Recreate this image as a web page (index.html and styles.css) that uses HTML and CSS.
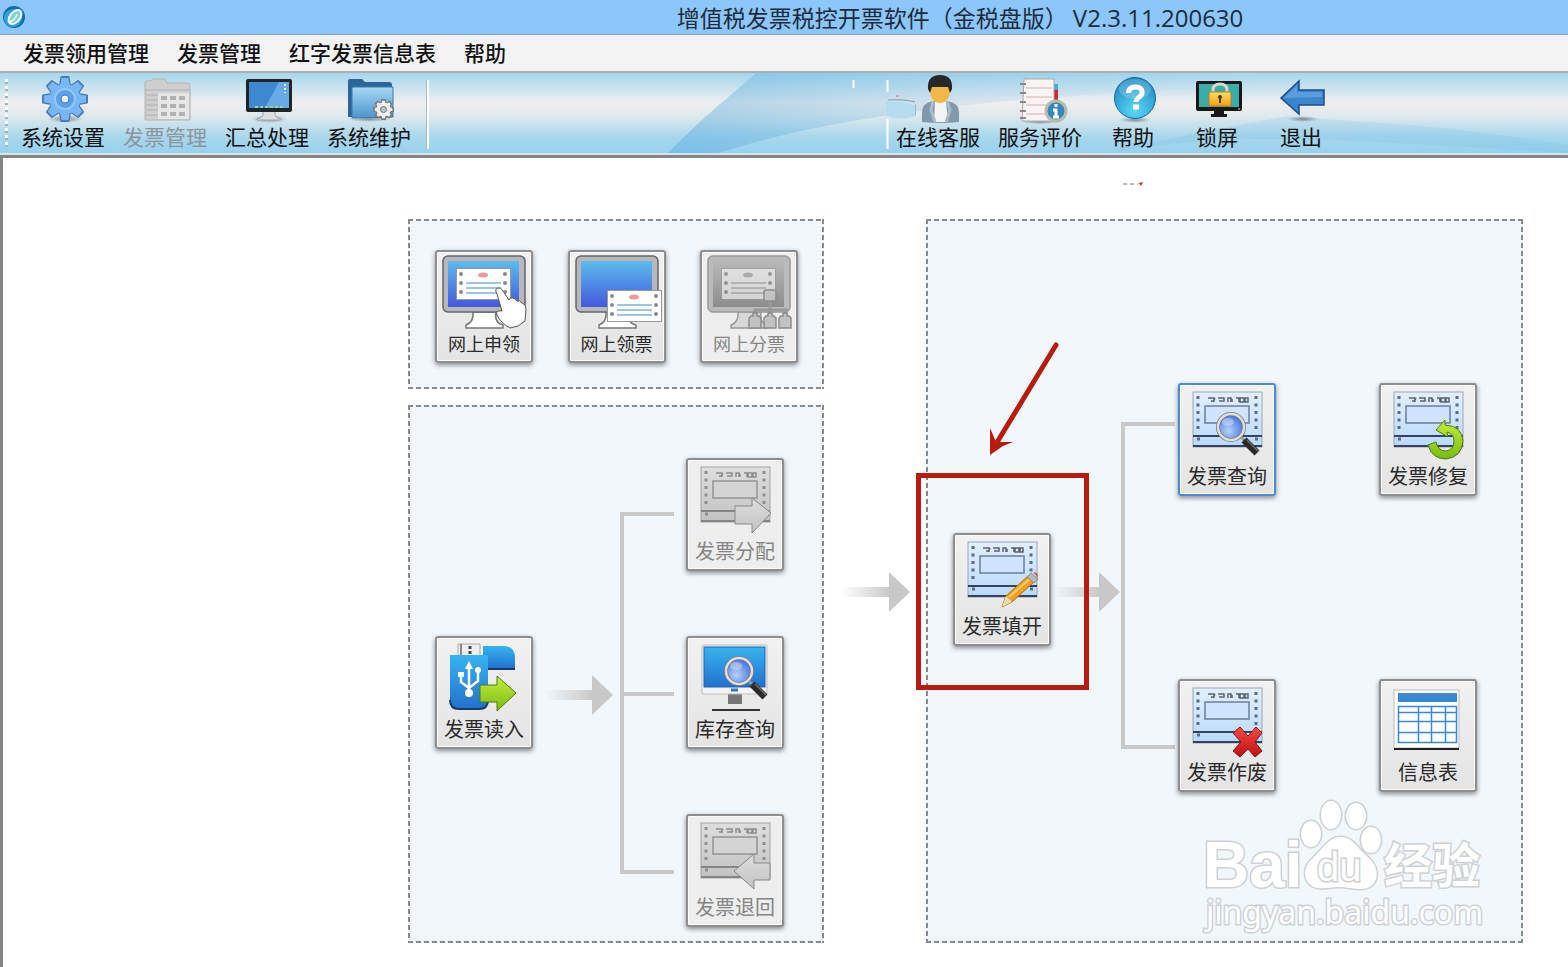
FILE: index.html
```
<!DOCTYPE html>
<html lang="zh-CN">
<head>
    <meta charset="UTF-8">
    <meta name="viewport" content="width=device-width, initial-scale=1.0">
    <title>增值税发票税控开票软件</title>
    <link rel="stylesheet" href="styles.css">
</head>
<body>
    <!-- shared gradients and icon parts -->
    <svg class="defs" width="0" height="0" aria-hidden="true">
        <defs>
            <linearGradient id="g-screen" x1="0" y1="0" x2="0" y2="1"><stop offset="0" stop-color="#5cbcec"/><stop offset="1" stop-color="#4458dc"/></linearGradient>
            <linearGradient id="g-screen-off" x1="0" y1="0" x2="0" y2="1"><stop offset="0" stop-color="#b8b8b8"/><stop offset="1" stop-color="#8c8c8c"/></linearGradient>
            <linearGradient id="g-paper" x1="0" y1="0" x2="0" y2="1"><stop offset="0" stop-color="#e2efff"/><stop offset="1" stop-color="#b9d9fb"/></linearGradient>
            <linearGradient id="g-paper-off" x1="0" y1="0" x2="0" y2="1"><stop offset="0" stop-color="#dedede"/><stop offset="1" stop-color="#c2c2c2"/></linearGradient>
            <linearGradient id="g-sky" x1="0" y1="0" x2="0" y2="1"><stop offset="0" stop-color="#36b4f0"/><stop offset="1" stop-color="#2470cc"/></linearGradient>
            <linearGradient id="g-green" x1="0" y1="0" x2="0" y2="1"><stop offset="0" stop-color="#c6ee3c"/><stop offset="1" stop-color="#78bc10"/></linearGradient>
            <linearGradient id="g-red" x1="0" y1="0" x2="0" y2="1"><stop offset="0" stop-color="#f04a40"/><stop offset="1" stop-color="#c01018"/></linearGradient>
            <linearGradient id="g-fade" x1="0" y1="0" x2="1" y2="0"><stop offset="0" stop-color="#c8c8c8" stop-opacity="0"/><stop offset="1" stop-color="#c8c8c8"/></linearGradient>
            <linearGradient id="g-lock" x1="0" y1="0" x2="0" y2="1"><stop offset="0" stop-color="#fddc6a"/><stop offset="1" stop-color="#f0a010"/></linearGradient>
            <linearGradient id="g-folder" x1="0" y1="0" x2="0" y2="1"><stop offset="0" stop-color="#a8d8f4"/><stop offset="1" stop-color="#4c94cc"/></linearGradient>
            <linearGradient id="g-wave" x1="0" y1="0" x2="1" y2="0"><stop offset="0" stop-color="#4ea4dc" stop-opacity="0.4"/><stop offset="0.5" stop-color="#5aaee0" stop-opacity="0.15"/><stop offset="1" stop-color="#5aaee0" stop-opacity="0"/></linearGradient>
            <radialGradient id="g-lens" cx="0.4" cy="0.65" r="0.6"><stop offset="0" stop-color="#b4d2ff"/><stop offset="1" stop-color="#4c78dc"/></radialGradient>
            <radialGradient id="g-help" cx="0.5" cy="0.8" r="0.8"><stop offset="0" stop-color="#5cd8f6"/><stop offset="1" stop-color="#1e86c0"/></radialGradient>
            <radialGradient id="g-shadow"><stop offset="0" stop-color="#334" stop-opacity="0.5"/><stop offset="1" stop-color="#334" stop-opacity="0"/></radialGradient>
        </defs>

        <symbol id="invoice" viewBox="0 0 94 80">
            <rect x="13" y="7" width="69" height="55" fill="url(#g-paper)" stroke="#9aa6b8"/>
            <path d="M18 11v37M76 11v37" stroke="#5e6b80" stroke-width="3" stroke-dasharray="3 4.5"/>
            <path d="M17 54h3M75 54h3" stroke="#5e6b80" stroke-width="3"/>
            <path d="M28 13h6v3h-3M35 13l-2 4M38 13h6v3h-5M48 17v-4h3v4M52 14v3M56 13h3v4M60 13h4v4h-4zM65 13h3v4h-3z" fill="none" stroke="#5c6268" stroke-width="1.5"/>
            <rect x="25" y="21" width="44" height="17" fill="#d0e5fd" stroke="#697d9c" stroke-width="1.5"/>
            <path d="M13 51h69M13 61h69" stroke="#33425e" stroke-width="2"/>
        </symbol>
        <symbol id="invoice-off" viewBox="0 0 94 80">
            <rect x="13" y="7" width="69" height="55" fill="url(#g-paper-off)" stroke="#a4a4a4"/>
            <path d="M18 11v37M76 11v37" stroke="#8f8f8f" stroke-width="3" stroke-dasharray="3 4.5"/>
            <path d="M17 54h3M75 54h3" stroke="#8f8f8f" stroke-width="3"/>
            <path d="M28 13h6v3h-3M35 13l-2 4M38 13h6v3h-5M48 17v-4h3v4M52 14v3M56 13h3v4M60 13h4v4h-4zM65 13h3v4h-3z" fill="none" stroke="#8c8c8c" stroke-width="1.5"/>
            <rect x="25" y="21" width="44" height="17" fill="#d4d4d4" stroke="#949494" stroke-width="1.5"/>
            <path d="M13 51h69M13 61h69" stroke="#858585" stroke-width="2"/>
        </symbol>
        <symbol id="lens" viewBox="0 0 48 48">
            <path d="M26 26l6 6" stroke="#999" stroke-width="3"/>
            <path d="M30 30l13 13" stroke="#2a2a2a" stroke-width="7"/>
            <path d="M33 30l11 11" stroke="#6c6c6c" stroke-width="1.5"/>
            <circle cx="17" cy="17" r="13" fill="url(#g-lens)" stroke="#777" stroke-width="4"/>
            <circle cx="17" cy="17" r="13" fill="none" stroke="#dedede" stroke-width="2.5"/>
            <ellipse cx="14" cy="12" rx="6" ry="4" fill="#fff" opacity="0.35"/>
        </symbol>
        <symbol id="slip" viewBox="0 0 55 32">
            <rect x="0.5" y="0.5" width="54" height="31" fill="#fff" stroke="#999"/>
            <g fill="#8a8a8a"><circle cx="5" cy="6" r="2"/><circle cx="5" cy="15" r="2"/><circle cx="5" cy="24" r="2"/><circle cx="49" cy="6" r="2"/><circle cx="49" cy="15" r="2"/><circle cx="49" cy="24" r="2"/></g>
            <ellipse cx="27" cy="7" rx="5" ry="2.5" fill="#f09a9a"/>
            <path d="M10 15h35M10 20h35M10 25h35" stroke="#7eb4dc" stroke-width="1.5"/>
        </symbol>
        <symbol id="arrow" viewBox="0 0 68 40">
            <rect x="0" y="15" width="48" height="10" fill="url(#g-fade)"/>
            <path d="M47 0l21 20-21 20z" fill="#c8c8c8"/>
        </symbol>
        <symbol id="gear" viewBox="-24 -24 48 48">
            <g><path id="tooth" d="M-5-14l1.500-8h7L5-14v28l-1.500 8h-7L-5 14z"/><use href="#tooth" transform="rotate(45)"/><use href="#tooth" transform="rotate(90)"/><use href="#tooth" transform="rotate(135)"/></g>
            <circle r="16" stroke="none"/>
        </symbol>
    </svg>

    <header class="titlebar">
        <svg class="app-icon" width="24" height="24" viewBox="0 0 24 24" aria-hidden="true">
            <circle cx="12" cy="12" r="11" fill="#0d6fae"/>
            <circle cx="11" cy="13" r="9" fill="#2ba6dc"/>
            <ellipse cx="13" cy="12" rx="5" ry="8" transform="rotate(40 13 12)" fill="#7fd2dc" stroke="#fff" stroke-width="2"/>
            <path d="M7 17c4-1 7-4 8-8" fill="none" stroke="#e8fbff" stroke-width="1.5"/>
        </svg>
        <h1 class="title">增值税发票税控开票软件（金税盘版） <span class="version">V2.3.11.200630</span></h1>
    </header>

    <nav class="menubar">
        <button class="menu">发票领用管理</button>
        <button class="menu">发票管理</button>
        <button class="menu">红字发票信息表</button>
        <button class="menu">帮助</button>
    </nav>

    <div class="toolbar">
        <svg class="wave" viewBox="0 0 900 82" preserveAspectRatio="none" aria-hidden="true">
            <path d="M0 82C30 50 66 20 88 0H600V14C300 22 150 50 50 82z" fill="url(#g-wave)"/>
            <path d="M440 82C560 60 640 66 900 82V74C760 50 700 52 620 44 560 56 500 66 440 82z" fill="#4ea4dc" opacity="0.12"/>
        </svg>
        <div class="grip"></div>
        <div class="tools">
            <button class="tool">
                <svg class="tool-icon" viewBox="0 0 48 48"><ellipse cx="24" cy="43" rx="18" ry="4" fill="url(#g-shadow)"/>
                    <use href="#gear" x="0" y="-1" width="48" height="48" fill="#4a7cb8" stroke="#4a7cb8" stroke-width="2" stroke-linejoin="round"/>
                    <use href="#gear" x="1" y="0" width="46" height="46" fill="#78b6f6"/>
                    <circle cx="24" cy="23" r="10" fill="#5a9eec" stroke="#92c8fc" stroke-width="2"/><circle cx="24" cy="23" r="4" fill="#eef6ff" stroke="#4a7cb8"/></svg>
                <span>系统设置</span>
            </button>
            <button class="tool" disabled>
                <svg class="tool-icon" viewBox="0 0 48 48"><path d="M2 44V7q0-2 2-2h4l2-2h12l2 4h21q2 0 2 2v35z" fill="#cfcfcf" stroke="#b4b4b4"/><path d="M2 14h45M3 19h12M3 24h12M3 29h12M3 34h12M3 39h12" stroke="#b0b0b0"/><rect x="15" y="17" width="31" height="26" fill="#e6e6e6"/>
                    <g fill="#b2b2b2"><path d="M18 20h6v4h-6zM27 20h6v4h-6zM36 20h6v4h-6zM18 28h6v4h-6zM27 28h6v4h-6zM36 28h6v4h-6zM18 36h6v4h-6zM27 36h6v4h-6zM36 36h6v4h-6z"/></g></svg>
                <span>发票管理</span>
            </button>
            <button class="tool">
                <svg class="tool-icon" viewBox="0 0 48 48"><ellipse cx="24" cy="43" rx="18" ry="4" fill="url(#g-shadow)"/><path d="M18 34h12v5q1 3 6 4v1H12v-1q5-1 6-4z" fill="#dcdee0" stroke="#a0a4a8"/><rect x="1" y="3" width="46" height="33" rx="2" fill="#202428"/><rect x="4" y="6" width="40" height="26" fill="#3f88d0"/><path d="M34 6h10v26H20z" fill="#68aae6"/><path d="M10 31h28" stroke="#9ad0a8" stroke-width="2" stroke-dasharray="3 2"/><path d="M40 8v9" stroke="#d8ecff" stroke-width="2" stroke-dasharray="2 2"/></svg>
                <span>汇总处理</span>
            </button>
            <button class="tool">
                <svg class="tool-icon" viewBox="0 0 48 48"><ellipse cx="22" cy="43" rx="22" ry="3" fill="url(#g-shadow)"/><path d="M1 41V5q0-2 2-2h12l3 3h24q3 0 3 3v32z" fill="#2c6698"/><path d="M5 42V12q0-1 1-1h40v30z" fill="url(#g-folder)" stroke="#3a78ac"/>
                    <use href="#gear" x="26" y="23" width="21" height="21" fill="#f0f0f0" stroke="#777" stroke-width="4"/><use href="#gear" x="27" y="24" width="19" height="19" fill="#f0f0f0"/><circle cx="36.5" cy="33.5" r="3" fill="#b8c4cc" stroke="#777"/></svg>
                <span>系统维护</span>
            </button>
        </div>
        <div class="divider"></div>

        <div class="tools tools-right">
            <svg class="notch" width="64" height="70" viewBox="0 0 64 70" aria-hidden="true">
                <path d="M1.500 0v8" stroke="#fff" stroke-width="2"/><path d="M35.500 0v12M35.500 39v30" stroke="#fff" stroke-width="2"/>
                <path d="M34 22q16-2 30 4v10q-14 5-30 0z" fill="#b4dcee"/><path d="M36 20q16-1 27 2M64 24v11" fill="none" stroke="#8a98a0"/>
                <path d="M44 16h3" stroke="#e07070"/>
            </svg>
            <button class="tool">
                <svg class="tool-icon" viewBox="0 0 48 48"><path d="M6 46V36q0-9 11-11h14q12 2 12 11v10q-18 2-37 0z" fill="#8298ac"/><path d="M19 25h11l2 21H18z" fill="#f4f4f4"/><path d="M17 25l-2 9 4 12M31 25l3 9-4 12" fill="none" stroke="#a8bccc" stroke-width="3"/><ellipse cx="24" cy="16" rx="10" ry="11" fill="#f0b848"/><path d="M12 13Q11-1 24-1t12 14l-2 4-2-6H16l-2 6z" fill="#282828"/></svg>
                <span>在线客服</span>
            </button>
            <button class="tool">
                <svg class="tool-icon" viewBox="0 0 48 48"><ellipse cx="22" cy="46" rx="19" ry="2" fill="url(#g-shadow)"/><rect x="35" y="8" width="5" height="8" fill="#38b0d8"/><rect x="35" y="14" width="5" height="10" fill="#d42430"/><path d="M6 3h30v42H4z" fill="#fbf4f4" stroke="#b0a8a8"/><path d="M8 12h26M8 21h26M8 29h26M8 38h26" stroke="#e2aaaa"/><path d="M2 8h6M2 17h6M2 26h6M2 35h6M2 42h6" stroke="#888" stroke-width="2"/><circle cx="38" cy="35" r="10" fill="#3488b8" stroke="#b8bcb0" stroke-width="3"/><path d="M38 28v3M35 34h3v7M35 41h6" stroke="#fff" stroke-width="3" fill="none"/></svg>
                <span>服务评价</span>
            </button>
            <button class="tool tool-short">
                <svg class="tool-icon" viewBox="0 0 48 48"><ellipse cx="24" cy="44" rx="16" ry="3" fill="url(#g-shadow)"/><circle cx="24" cy="22" r="20.5" fill="url(#g-help)" stroke="#1a6c9c"/><ellipse cx="24" cy="13" rx="16" ry="10" fill="#fff" opacity="0.18"/><path d="M17.500 17q0-6 7-6t6.500 6c0 4-6 4-6 9" fill="none" stroke="#fff" stroke-width="5"/><path d="M22 28.500h6v5h-6z" fill="#fff"/></svg>
                <span>帮助</span>
            </button>
            <button class="tool tool-short">
                <svg class="tool-icon" viewBox="0 0 48 48"><path d="M19 34h10v4h3v3H16v-3h3z" fill="#181818"/><rect x="1" y="5" width="46" height="30" rx="2" fill="#181818"/><rect x="4" y="8" width="40" height="23" fill="#3aacac"/><path d="M18 17v-3q0-6 7-6t7 6v3" fill="none" stroke="#d8d8cc" stroke-width="3"/><rect x="14" y="16" width="22" height="14" rx="1" fill="url(#g-lock)" stroke="#c07c10"/><circle cx="25" cy="21" r="2" fill="#503808"/><path d="M25 21v6" stroke="#503808" stroke-width="2"/><path d="M43 33h2" stroke="#ccc"/></svg>
                <span>锁屏</span>
            </button>
            <button class="tool tool-short">
                <svg class="tool-icon" viewBox="0 0 48 48"><ellipse cx="24" cy="43" rx="16" ry="3" fill="url(#g-shadow)"/><path d="M2 22L20 5v9h25v15H20v9z" fill="#3c84cc" stroke="#1c4c8c" stroke-width="1.5"/><path d="M5 22L18 9v7h25v5z" fill="#68a8e2" opacity="0.7"/></svg>
                <span>退出</span>
            </button>
        </div>
    </div>

    <main class="workspace">
        <svg class="speck" width="20" height="6" viewBox="0 0 20 6" aria-hidden="true"><path d="M0 3h4M7 3h4" stroke="#777"/><path d="M14 3h2" stroke="#aaa"/><path d="M16 2l4-1-2 4z" fill="#c22"/></svg>

        <div class="left-column">
            <section class="panel panel-online">
                <button class="tile tile-online">
                    <svg class="tile-icon" viewBox="0 0 94 80"><path d="M36 60h23q-2 11 7 13v3H29v-3q8-3 7-13z" fill="#fff" stroke="#777" stroke-width="1.5"/><rect x="6" y="4" width="82" height="56" rx="5" fill="#b6b8bb" stroke="#666" stroke-width="1.5"/><rect x="11" y="9" width="71" height="46" fill="url(#g-screen)"/><use href="#slip" x="19" y="16" width="55" height="32"/><path d="M60 42q-3-5 1-6 3-1 5 3l6 9q1-3 4-2 2 0 4 3 3-1 5 2 4 1 4 6l-1 12-7 5-8 2q-9-5-13-13-2-5 5-4z" fill="#fff" stroke="#555"/></svg>
                    <span>网上申领</span>
                </button>
                <button class="tile tile-online">
                    <svg class="tile-icon" viewBox="0 0 94 80"><path d="M36 60h23q-2 11 7 13v3H29v-3q8-3 7-13z" fill="#fff" stroke="#777" stroke-width="1.5"/><rect x="6" y="4" width="82" height="56" rx="5" fill="#b6b8bb" stroke="#666" stroke-width="1.5"/><rect x="11" y="9" width="71" height="46" fill="url(#g-screen)"/><use href="#slip" x="37" y="38" width="55" height="32"/></svg>
                    <span>网上领票</span>
                </button>
                <button class="tile tile-online" disabled>
                    <svg class="tile-icon" viewBox="0 0 94 80"><path d="M36 60h23q-2 11 7 13v3H29v-3q8-3 7-13z" fill="#d8d8d8" stroke="#999" stroke-width="1.5"/><rect x="6" y="4" width="82" height="56" rx="5" fill="#bababa" stroke="#999" stroke-width="1.5"/><rect x="11" y="9" width="71" height="46" fill="url(#g-screen-off)"/><use class="gray" href="#slip" x="19" y="16" width="55" height="32"/><path d="M68 44v20M53 64v-6h31v6" fill="none" stroke="#999" stroke-width="3"/><g fill="#c2c2c2" stroke="#8c8c8c" stroke-width="1.5"><rect x="62" y="38" width="12" height="11" rx="2"/><path d="M49 64h2v-3h4v3h2l2 2v10H47V66zM64 64h2v-3h4v3h2l2 2v10H62V66zM79 64h2v-3h4v3h2l2 2v10H77V66z"/></g></svg>
                    <span>网上分票</span>
                </button>
            </section>

            <section class="panel panel-stock">
                <button class="tile">
                    <svg class="tile-icon" viewBox="0 0 94 80"><path d="M21 6h22v12H21z" fill="#eee" stroke="#aaa"/><path d="M24 6v12" stroke="#888" stroke-width="2"/><path d="M33 8v3M33 13v3" stroke="#444" stroke-width="3"/><path d="M46 8h22q10 1 10 12v11H46z" fill="url(#g-sky)"/><path d="M46 31h32" stroke="#123c6c" stroke-width="2"/><path d="M13 17h38v44q0 10-10 10H22q-9 0-9-9z" fill="url(#g-sky)"/><path d="M13 62q0 9 9 9h20q9 0 9-9" fill="none" stroke="#123c6c" stroke-width="2"/><path d="M32 55V28M32 50l-8-6v-7M32 50l9-7V34" fill="none" stroke="#fff" stroke-width="2.5"/><path d="M32 23l4 8h-8z" fill="#fff"/><circle cx="32" cy="55" r="4" fill="#fff"/><circle cx="41" cy="32" r="3" fill="#fff"/><path d="M21 34h6v5h-6z" fill="#fff"/><path d="M43 47h17v-9l19 17-19 18v-9H43z" fill="url(#g-green)" stroke="#4c7c10"/></svg>
                    <span>发票读入</span>
                </button>
                <svg class="flow-arrow" width="68" height="40" aria-hidden="true"><use href="#arrow" width="68" height="40"/></svg>
                <svg class="bracket" width="54" height="362" viewBox="0 0 54 362" aria-hidden="true"><path d="M54 2H2v358h52M2 182h52" fill="none" stroke="#c8c8c8" stroke-width="4"/></svg>
                <div class="tile-column">
                    <button class="tile" disabled>
                        <svg class="tile-icon" viewBox="0 0 94 80"><use href="#invoice-off" width="94" height="80"/><path d="M47 46h17v-8l19 15-19 20v-9H47z" fill="url(#g-paper-off)" stroke="#888"/></svg>
                        <span>发票分配</span>
                    </button>
                    <button class="tile">
                        <svg class="tile-icon" viewBox="0 0 94 80"><path d="M40 56h14v10H40z" fill="#777"/><path d="M24 72h48" stroke="#333" stroke-width="2"/><rect x="14" y="7" width="65" height="49" rx="1" fill="#f4f4f4" stroke="#bbb"/><rect x="16" y="9" width="61" height="40" fill="url(#g-sky)" stroke="#1f64b0"/><path d="M43 52h7" stroke="#3478c8" stroke-width="3"/><use href="#lens" x="34" y="16" width="48" height="48"/></svg>
                        <span>库存查询</span>
                    </button>
                    <button class="tile" disabled>
                        <svg class="tile-icon" viewBox="0 0 94 80"><use href="#invoice-off" width="94" height="80"/><path d="M82 47H66v-9L46 55l20 18v-9h16z" fill="url(#g-paper-off)" stroke="#888"/></svg>
                        <span>发票退回</span>
                    </button>
                </div>
            </section>
        </div>

        <div class="between">
            <svg width="68" height="40" aria-hidden="true"><use href="#arrow" width="68" height="40"/></svg>
        </div>

        <section class="panel panel-invoice">
            <div class="highlighted">
                <button class="tile">
                    <svg class="tile-icon" viewBox="0 0 94 80"><use href="#invoice" width="94" height="80"/><path d="M47 72l4-11 22-20 6 6-22 20z" fill="#f0a020" stroke="#b06c10"/><path d="M54 62l22-19" stroke="#fcd060" stroke-width="2"/><path d="M47 72l4-11 6 6z" fill="#ecdcb0"/><path d="M72 42l4-4 7 6-4 4z" fill="#b8b8c0" stroke="#888"/><path d="M78 37l4 1 1 5z" fill="#d05838"/></svg>
                    <span>发票填开</span>
                </button>
                <div class="mark-box"></div>
                <svg class="mark-arrow" width="70" height="114" viewBox="0 0 70 114" aria-hidden="true"><path d="M67 3L7 102" stroke="#b81c10" stroke-width="5" stroke-linecap="round"/><path d="M1 113V86l6 14 17 0-10 4z" fill="#b81c10"/></svg>
            </div>
            <svg class="flow-arrow-short" width="68" height="40" aria-hidden="true"><use href="#arrow" width="68" height="40"/></svg>
            <svg class="bracket bracket-invoice" width="54" height="327" viewBox="0 0 54 327" aria-hidden="true"><path d="M54 2H2v323h52" fill="none" stroke="#c8c8c8" stroke-width="4"/></svg>
            <div class="tile-grid">
                <button class="tile tile-selected">
                    <svg class="tile-icon" viewBox="0 0 94 80"><use href="#invoice" width="94" height="80"/><use href="#lens" x="34" y="25" width="48" height="48"/></svg>
                    <span>发票查询</span>
                </button>
                <button class="tile">
                    <svg class="tile-icon" viewBox="0 0 94 80"><use href="#invoice" width="94" height="80"/><path d="M47 60l8-3q2 9 10 9 8-1 8-10 0-7-7-9l1 5-12-7 9-10v5q17 1 18 16-1 16-17 18-14 0-18-14z" fill="url(#g-green)" stroke="#4c7c10"/></svg>
                    <span>发票修复</span>
                </button>
                <button class="tile">
                    <svg class="tile-icon" viewBox="0 0 94 80"><use href="#invoice" width="94" height="80"/><path d="M53 52l7-6 8 9 8-9 6 6-7 9 7 9-7 6-7-8-8 8-7-6 8-9z" fill="url(#g-red)" stroke="#8c1014"/></svg>
                    <span>发票作废</span>
                </button>
                <button class="tile">
                    <svg class="tile-icon" viewBox="0 0 94 80"><rect x="13" y="9" width="65" height="58" fill="#fff" stroke="#bbb"/><path d="M13 68h65" stroke="#222" stroke-width="2"/><path d="M17 12h59v9H17z" fill="#3a88d4"/><path d="M17.500 25.500h58v36h-58zM37.500 25v37M50.500 25v37M64.500 25v37M17 31.500h59M17 40.500h59M17 51.500h59" fill="none" stroke="#3a88d4" stroke-width="1.5"/></svg>
                    <span>信息表</span>
                </button>
            </div>
            <svg class="watermark" width="290" height="140" viewBox="0 0 290 140" role="img" aria-label="Baidu 经验">
                <g fill="#fff" stroke="#cdd1d5" stroke-width="3" paint-order="stroke">
                    <text class="wm-brand" x="2" y="91">Bai</text>
                    <ellipse cx="110" cy="38" rx="10" ry="13"/><ellipse cx="130" cy="19" rx="10" ry="14"/><ellipse cx="155" cy="20" rx="10" ry="13"/><ellipse cx="170" cy="44" rx="10" ry="13"/>
                    <path d="M140 41c12 0 17 12 28 21 13 12 9 31-8 31-9 0-13-2-22-2s-14 2-21 1c-14-2-17-18-7-28 12-11 17-23 30-23z"/>
                    <text class="wm-du" x="116" y="85">du</text>
                    <text class="wm-cn" x="183" y="87">经验</text>
                    <text class="wm-url" x="5" y="128">jingyan.baidu.com</text>
                </g>
            </svg>
        </section>
    </main>
</body>
</html>
```
FILE: styles.css
```
* {
    box-sizing: border-box;
}
body {
    margin: 0;
    min-height: 100vh;
    display: flex;
    flex-direction: column;
    overflow-x: hidden;
    font-family: "Noto Sans CJK SC", sans-serif;
    background-color: #fff;
    color: #111;
}
button {
    font-family: inherit;
    color: inherit;
    border: none;
    background: none;
    padding: 0;
    cursor: pointer;
}
.defs {
    position: absolute;
}

/* title bar */
.titlebar {
    position: relative;
    height: 35px;
    padding-left: 352px;
    display: flex;
    align-items: center;
    justify-content: center;
    background-color: #8cc6fa;
    border-bottom: 1px solid #7ea4c4;
}
.app-icon {
    position: absolute;
    left: 2px;
    top: 5px;
}
.title {
    margin: 0;
    font-size: 23px;
    font-weight: 400;
    line-height: 32px;
    white-space: nowrap;
    color: #1c2c3c;
}
.version {
    font-family: "Open Sans", sans-serif;
    font-size: 24px;
}

/* menu */
.menubar {
    display: flex;
    gap: 28px;
    height: 36px;
    padding-left: 23px;
    background-color: #f4f3f4;
}
.menu {
    font-size: 21px;
    font-weight: 500;
    line-height: 34px;
    padding-bottom: 2px;
}

/* toolbar */
.toolbar {
    position: relative;
    display: flex;
    height: 87px;
    padding-left: 5px;
    border-top: 2px solid #a8b0b4;
    border-bottom: 3px solid #858585;
    background: linear-gradient(#a6d6ec, #cde4ef 20%, #efeeef 36%, #dfe9ed 52%, #a8d7ec 78%, #98d1ee 97%, #d4e4ec 98%);
}
.wave {
    position: absolute;
    left: 668px;
    top: 0;
    width: calc(100% - 668px);
    height: 80px;
}
.grip {
    width: 3px;
    margin: 6px 4px 6px 0;
    background: repeating-linear-gradient(#fff 0 3px, #a0b4bc 3px 5px, transparent 5px 7px);
}
.tools {
    position: relative;
    display: flex;
}
.tools-right {
    margin-left: auto;
    padding-right: 225px;
}
.tool {
    width: 102px;
    padding-top: 3px;
    display: flex;
    flex-direction: column;
    align-items: center;
    font-size: 21px;
    line-height: 24px;
}
.tool-short {
    width: 84px;
}
.tool:disabled {
    color: #8c959b;
}
.tool-icon {
    width: 52px;
    height: 48px;
    padding-left: 4px;
    overflow: visible;
}
.divider {
    width: 3px;
    margin: 7px 0 6px 6px;
    background-color: #fff;
    border-left: 1px solid #a8bcc4;
}
.notch {
    position: absolute;
    left: -35px;
    top: 7px;
}

/* workspace */
.workspace {
    position: relative;
    flex: 1;
    display: flex;
    justify-content: flex-end;
    padding: 61px 45px 24px;
    border-left: 3px solid #858585;
}
.speck {
    position: absolute;
    right: 425px;
    top: 23px;
}
.left-column {
    display: flex;
    flex-direction: column;
    gap: 16px;
}
.panel {
    --dash: #868b90;
    display: flex;
    align-items: center;
    background:
        repeating-linear-gradient(90deg, var(--dash) 0 5px, transparent 5px 8px) top / 100% 2px no-repeat,
        repeating-linear-gradient(90deg, var(--dash) 0 5px, transparent 5px 8px) bottom / 100% 2px no-repeat,
        repeating-linear-gradient(var(--dash) 0 5px, transparent 5px 8px) left / 2px 100% no-repeat,
        repeating-linear-gradient(var(--dash) 0 5px, transparent 5px 8px) right / 2px 100% no-repeat,
        #f2f7fc;
}
.panel-online {
    justify-content: space-between;
    padding: 31px 26px 26px 27px;
}
.panel-stock {
    flex: 1;
    padding: 37px 40px 0 27px;
}
.panel-invoice {
    position: relative;
    padding: 13px 46px 0 27px;
}
.tile {
    flex: none;
    width: 98px;
    height: 113px;
    display: flex;
    flex-direction: column;
    align-items: center;
    font-size: 20px;
    line-height: 22px;
    color: #2a2a2a;
    border: 2px solid #8e8e8e;
    border-radius: 3px;
    background: linear-gradient(#f1f1f1, #e4e4e4);
    box-shadow: 0 2px 5px rgba(0, 0, 0, 0.45), inset 0 0 0 1px #fafafa;
}
.tile:disabled {
    color: #858585;
    background: #eee;
}
.tile-selected {
    border-color: #4a8cd0;
}
.tile-online {
    font-size: 18px;
}
.tile-icon {
    flex: none;
    width: 94px;
    height: 80px;
}
.gray {
    filter: grayscale(1);
    opacity: 0.6;
}
.tile-column {
    display: flex;
    flex-direction: column;
    gap: 65px;
    margin-left: 12px;
}
.tile-grid {
    display: grid;
    grid-template-columns: auto auto;
    gap: 183px 103px;
    margin-left: 3px;
}
.flow-arrow {
    flex: none;
    margin: 4px 7px 0 12px;
}
.flow-arrow-short {
    flex: none;
    margin: 8px 1px 0 1px;
}
.bracket {
    flex: none;
}
.bracket-invoice {
    margin-bottom: 4px;
}
.between {
    display: flex;
    align-items: center;
    padding: 22px 16px 0 18px;
}

/* callout on the invoice button */
.highlighted {
    position: relative;
    z-index: 1;
    margin-top: 4px;
}
.mark-box {
    position: absolute;
    left: -37px;
    top: -60px;
    width: 173px;
    height: 217px;
    border: 5px solid #b81c10;
    pointer-events: none;
}
.mark-arrow {
    position: absolute;
    left: 36px;
    top: -191px;
}

/* watermark */
.watermark {
    position: absolute;
    right: 32px;
    bottom: 7px;
}
.wm-brand {
    font: bold 64px "Liberation Sans", sans-serif;
}
.wm-du {
    font: 40px "Liberation Sans", sans-serif;
}
.wm-cn {
    font: bold 48px "Noto Sans CJK SC", sans-serif;
}
.wm-url {
    font: 32px "Noto Sans", sans-serif;
}
```
